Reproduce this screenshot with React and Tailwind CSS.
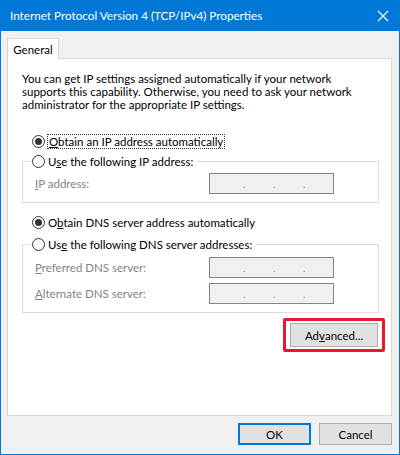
import { useState } from "react";

const FONT = { fontFamily: 'Lato, "Noto Sans", sans-serif' };

function Radio({ checked, onClick }) {
  return (
    <span
      onClick={onClick}
      className="flex h-[13px] w-[13px] shrink-0 items-center justify-center rounded-full border border-[#333] bg-white"
    >
      {checked && <span className="h-[7px] w-[7px] rounded-full bg-[#333]" />}
    </span>
  );
}

function IpBox() {
  return (
    <div className="flex h-[21px] w-[125px] items-center border border-[#838383] bg-[#f0f0f0] pl-[33px] text-[10px] leading-none text-[#838383]">
      <span className="w-[30px]">.</span>
      <span className="w-[30px]">.</span>
      <span>.</span>
    </div>
  );
}

function Field({ label }) {
  return (
    <div className="flex items-center justify-between pl-[12px] pr-[44px]">
      <span className="text-[#838383]">{label}</span>
      <IpBox />
    </div>
  );
}

export default function App() {
  const [ipAuto, setIpAuto] = useState(true);
  const [dnsAuto, setDnsAuto] = useState(true);

  return (
    <div style={FONT} className="flex h-[455px] w-[400px] flex-col whitespace-nowrap bg-[#0078d7] px-px pb-px text-[11.5px] leading-[13px] text-black">
      {/* Title bar */}
      <div className="flex h-[31px] shrink-0 items-center justify-between pl-[9px] pr-[8px] text-white">
        <span className="text-[11.7px]">Internet Protocol Version 4 (TCP/IPv4) Properties</span>
        <svg width="12" height="12" viewBox="0 0 12 12" className="mr-[2px]">
          <path d="M1 1 L11 11 M11 1 L1 11" stroke="white" strokeWidth="1.1" />
        </svg>
      </div>

      <div className="flex flex-1 flex-col bg-[#f0f0f0] px-[6px] pt-[7px]">
        {/* Tab */}
        <div className="relative z-10 -mb-px flex h-[21px] w-[52px] items-center justify-center border border-b-0 border-[#d9d9d9] bg-white">
          General
        </div>

        {/* Panel */}
        <div className="flex h-[358px] w-[385px] flex-col border border-[#d9d9d9] bg-white pl-[14px] pr-[12px] pt-[13px]">
          <p className="leading-[13px]">
            You can get IP settings assigned automatically if your network
            <br />
            supports this capability. Otherwise, you need to ask your network
            <br />
            administrator for the appropriate IP settings.
          </p>

          <div className="mt-[24px] flex h-[13px] items-center gap-[2px] pl-[10px]">
            <Radio checked={ipAuto} onClick={() => setIpAuto(true)} />
            <span className="border border-dotted border-[#333] px-px leading-[13px]">
              <u>O</u>btain an IP address automatically
            </span>
          </div>

          <fieldset className="mt-[7px] h-[48px] border border-[#dcdcdc]">
            <legend className="ml-[8px] flex items-center gap-[3px] bg-white pr-[4px] pl-px">
              <Radio checked={!ipAuto} onClick={() => setIpAuto(false)} />
              <span>
                U<u>s</u>e the following IP address:
              </span>
            </legend>
            <div className="mt-[5px]">
              <Field label={<><u>I</u>P address:</>} />
            </div>
          </fieldset>

          <div className="mt-[13px] flex h-[13px] items-center gap-[3px] pl-[10px]">
            <Radio checked={dnsAuto} onClick={() => setDnsAuto(true)} />
            <span>
              O<u>b</u>tain DNS server address automatically
            </span>
          </div>

          <fieldset className="mt-[9px] h-[75px] border border-[#dcdcdc]">
            <legend className="ml-[8px] flex items-center gap-[3px] bg-white pr-[4px] pl-px">
              <Radio checked={!dnsAuto} onClick={() => setDnsAuto(false)} />
              <span>
                Us<u>e</u> the following DNS server addresses:
              </span>
            </legend>
            <div className="mt-[6px] flex flex-col gap-[5px]">
              <Field label={<><u>P</u>referred DNS server:</>} />
              <Field label={<><u>A</u>lternate DNS server:</>} />
            </div>
          </fieldset>

          <div className="-mr-[6px] mt-[5px] flex justify-end">
            <div className="rounded-[2px] border-[3px] border-[#e8192c] px-[4px] py-[2px]">
              <button className="flex h-[24px] w-[88px] items-center justify-center border border-[#adadad] bg-[#e1e1e1]">
                Ad<u>v</u>anced...
              </button>
            </div>
          </div>
        </div>

        {/* Footer buttons */}
        <div className="mt-[7px] flex justify-end gap-[8px] pr-[1px]">
          <button className="flex h-[22px] w-[73px] items-center justify-center border-2 border-[#0078d7] bg-[#e1e1e1]">
            OK
          </button>
          <button className="flex h-[22px] w-[73px] items-center justify-center border border-[#adadad] bg-[#e1e1e1]">
            Cancel
          </button>
        </div>
      </div>
    </div>
  );
}
